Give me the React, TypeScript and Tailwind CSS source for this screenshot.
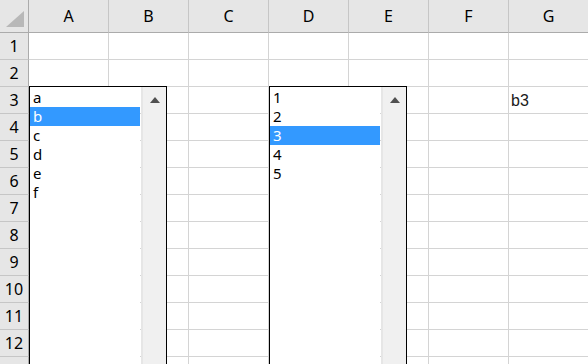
import React from "react";

const cols = ["A", "B", "C", "D", "E", "F", "G"];
const rows = Array.from({ length: 13 }, (_, i) => i + 1);

function ListBox({ items, selected, left }: { items: string[]; selected: number; left: string }) {
  return (
    <div className={`absolute top-[86px] ${left} w-[138px] h-[300px] border border-black flex bg-transparent`}>
      <div className="w-[110px] bg-white pt-px flex flex-col">
        {items.map((it, i) => (
          <div
            key={it}
            className={`h-[19px] leading-[19px] pl-[3px] text-[15px] ${i === selected ? "bg-[#3399ff] text-white" : "text-black"}`}
            style={{ fontFamily: '"Noto Sans", "Open Sans", sans-serif' }}
          >
            {it}
          </div>
        ))}
        <div className="flex-1 bg-white" />
      </div>
      <div className="w-px" />
      <div className="flex-1 bg-[#f0f0f0] border-l-2 border-[#e6e6e6] flex justify-center pt-[10px]">
        <svg width="10" height="6" viewBox="0 0 10 6">
          <polygon points="0,6 5,0 10,6" fill="#505050" />
        </svg>
      </div>
    </div>
  );
}

export default function App() {
  const font = { fontFamily: '"Noto Sans", "Open Sans", sans-serif' };
  return (
    <div className="relative w-[588px] h-[364px] overflow-hidden bg-white">
      <div className="grid grid-cols-[29px_repeat(7,80px)] grid-rows-[33px_repeat(13,27px)] w-[589px]">
        <div className="bg-[#e6e6e6] border-r border-b border-[#ababab] flex items-end justify-end pr-[4px] pb-[5px]">
          <svg width="18" height="16" viewBox="0 0 18 16">
            <polygon points="0,16 18,0 18,16" fill="#b8b8b8" />
          </svg>
        </div>
        {cols.map((c) => (
          <div
            key={c}
            className="bg-[#e6e6e6] border-r border-r-[#c6c6c6] border-b border-b-[#ababab] flex items-center justify-center text-[16px] text-black"
            style={font}
          >
            {c}
          </div>
        ))}
        {rows.map((r) => (
          <React.Fragment key={r}>
            <div
              className="bg-[#e6e6e6] border-r border-r-[#ababab] border-b border-b-[#c6c6c6] flex items-center justify-center text-[16px] text-black"
              style={font}
            >
              {r < 13 ? r : null}
            </div>
            {cols.map((c) => (
              <div key={c} className="border-r border-b border-[#d4d4d4] flex items-end pl-[2px] pb-[2px]">
                {r === 3 && c === "G" ? (
                  <span className="text-[16px] leading-[20px] text-[#1a1a1a]" style={{ fontFamily: '"Liberation Sans", Arial, sans-serif' }}>
                    b3
                  </span>
                ) : null}
              </div>
            ))}
          </React.Fragment>
        ))}
      </div>
      <ListBox items={["a", "b", "c", "d", "e", "f"]} selected={1} left="left-[29px]" />
      <ListBox items={["1", "2", "3", "4", "5"]} selected={2} left="left-[269px]" />
    </div>
  );
}
